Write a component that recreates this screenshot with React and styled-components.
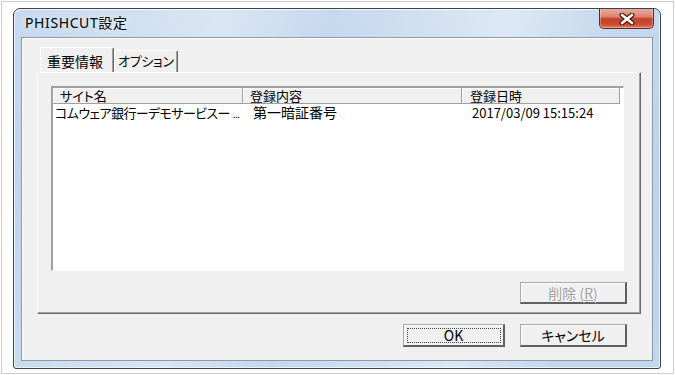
import React from 'react';
import styled, { createGlobalStyle } from 'styled-components';

const Global = createGlobalStyle`
  html, body { margin: 0; padding: 0; background: #fff; }
  body { font-family: "Noto Sans CJK JP", "Noto Sans", sans-serif; }
  * { box-sizing: border-box; }
`;

const Page = styled.div`
  width: 675px;
  height: 375px;
  padding: 1px;
  background: #fff;
`;

const Frame = styled.div`
  width: 673px;
  height: 373px;
  border: 1px solid #cfcfcf;
  padding: 6px 0 0 11px;
`;

const Window = styled.div`
  width: 648px;
  height: 361px;
  border: 1px solid #3a4350;
  border-radius: 7px 7px 3px 3px;
  background:
    linear-gradient(100deg, rgba(255,255,255,0) 0%, rgba(255,255,255,0.35) 30%, rgba(255,255,255,0) 45%, rgba(255,255,255,0.4) 70%, rgba(255,255,255,0) 85%),
    linear-gradient(180deg, #c6d9ee 0%, #bcd2ea 50%, #c2d7ee 100%);
  box-shadow: inset 1px 1px 0 rgba(255,255,255,0.75), inset -1px -1px 0 rgba(255,255,255,0.6);
  display: flex;
  flex-direction: column;
`;

const TitleBar = styled.div`
  height: 28px;
  display: flex;
  align-items: flex-start;
  justify-content: space-between;
  padding: 0 6px 0 11px;
`;

const Title = styled.div`
  font-family: "Noto Sans", "Noto Sans CJK JP", sans-serif;
  font-size: 14px;
  letter-spacing: 0.6px;
  line-height: 16px;
  color: #000;
  margin-top: 6px;
  text-shadow: 0 0 8px rgba(255,255,255,0.9);
`;

const CloseButton = styled.div`
  width: 55px;
  height: 20px;
  border: 1px solid #5b2a22;
  border-top: none;
  border-radius: 0 0 5px 5px;
  background: linear-gradient(180deg, #e8aa9c 0%, #dc8470 40%, #c5422c 52%, #cb4a32 80%, #df7a5e 100%);
  box-shadow: inset 0 -1px 0 rgba(255,255,255,0.35), inset 1px 0 0 rgba(255,255,255,0.3), inset -1px 0 0 rgba(255,255,255,0.3);
  display: flex;
  align-items: center;
  justify-content: center;
`;

const Client = styled.div`
  flex: 1;
  margin: 0 7px 7px 7px;
  border: 1px solid #8b9aab;
  background: #f0f0f0;
  box-shadow: inset 1px 1px 0 #fdfdfd;
  display: flex;
  flex-direction: column;
  padding-top: 9px;
`;

const TabStrip = styled.div`
  height: 25px;
  margin-left: 18px;
  display: flex;
  align-items: flex-end;
`;

const Tab = styled.div`
  height: ${p => (p.$active ? 25 : 22)}px;
  width: ${p => p.$w}px;
  padding-left: ${p => p.$pl}px;
  border-top: 1px solid #fff;
  border-left: 1px solid #fff;
  border-right: 1px solid #696969;
  box-shadow: inset -1px 0 0 #a0a0a0;
  border-radius: 2px 2px 0 0;
  font-size: ${p => p.$fs || 14}px;
  line-height: 18px;
  padding-top: ${p => (p.$active ? 4 : 1)}px;
  color: #000;
  font-feature-settings: "palt";
  letter-spacing: ${p => p.$ls || 0}px;
  white-space: nowrap;
`;

const Panel = styled.div`
  height: 242px;
  margin: 0 11px 0 15px;
  border-top: 1px solid #fff;
  border-left: 1px solid #fff;
  border-right: 1px solid #696969;
  border-bottom: 1px solid #696969;
  box-shadow: inset -1px -1px 0 #a0a0a0;
  padding: 13px 13px 9px 13px;
  display: flex;
  flex-direction: column;
`;

const ListView = styled.div`
  width: 573px;
  height: 185px;
  background: #fff;
  border-top: 2px solid #a0a0a0;
  border-left: 2px solid #a0a0a0;
  border-right: 1px solid #fff;
  border-bottom: 1px solid #fff;
  font-size: 14px;
  color: #000;
`;

const HeaderRow = styled.div`
  display: flex;
  height: 16px;
`;

const HeaderCell = styled.div`
  width: ${p => p.$w}px;
  padding-left: ${p => p.$pl}px;
  background: #f0f0f0;
  border-right: 1px solid #a0a0a0;
  border-bottom: 1px solid #a0a0a0;
  box-shadow: inset 1px 1px 0 #fff;
  font-size: 13px;
  line-height: 15px;
  white-space: nowrap;
  font-feature-settings: "palt";
`;

const Row = styled.div`
  display: flex;
  height: 17px;
  align-items: center;
`;

const Cell = styled.div`
  width: ${p => p.$w}px;
  padding-left: ${p => p.$pl}px;
  line-height: 17px;
  white-space: nowrap;
  overflow: ${p => (p.$clip ? 'hidden' : 'visible')};
  font-feature-settings: "palt";
  font-size: ${p => p.$fs || 14}px;
  letter-spacing: ${p => p.$ls || 0}px;
`;

const Dots = styled.span`
  letter-spacing: -0.5px;
  font-size: 10px;
  margin-left: 3px;
`;

const PanelButtons = styled.div`
  display: flex;
  justify-content: flex-end;
  margin-top: 11px;
`;

const Button = styled.div`
  width: ${p => p.$w}px;
  height: ${p => p.$h}px;
  background: #f0f0f0;
  border-top: 1px solid #a8a8a8;
  border-left: 1px solid #a8a8a8;
  border-right: 2px solid #616161;
  border-bottom: 2px solid #616161;
  box-shadow: inset 1px 1px 0 #fff;
  font-size: 14px;
  line-height: 18px;
  display: flex;
  align-items: center;
  justify-content: center;
  color: ${p => (p.$disabled ? '#a0a0a0' : '#000')};
  text-shadow: ${p => (p.$disabled ? '1px 1px 0 #fff' : 'none')};
  outline: ${p => (p.$focus ? '1px dotted #444' : 'none')};
  outline-offset: -5px;
  font-feature-settings: "palt";
  white-space: nowrap;
`;

const Underline = styled.span`
  text-decoration: underline;
  text-underline-offset: 1px;
`;

const DialogButtons = styled.div`
  display: flex;
  justify-content: flex-end;
  gap: 15px;
  margin-top: 10px;
  padding-right: 25px;
`;

const XIcon = () => (
  <svg width="16" height="12" viewBox="0 0 16 12">
    <path d="M3 2 L13 10 M13 2 L3 10" stroke="#4a1a12" strokeWidth="5" strokeLinecap="round" />
    <path d="M3 2 L13 10 M13 2 L3 10" stroke="#fff" strokeWidth="2.6" strokeLinecap="round" />
  </svg>
);

const cols = [190, 219, 158];

export default function App() {
  return (
    <Page>
      <Global />
      <Frame>
        <Window>
          <TitleBar>
            <Title>PHISHCUT設定</Title>
            <CloseButton>
              <XIcon />
            </CloseButton>
          </TitleBar>
          <Client>
            <TabStrip>
              <Tab $active $w={74} $pl={6}>重要情報</Tab>
              <Tab $w={64} $pl={3} $fs={13} $ls={-0.3}>オプション</Tab>
            </TabStrip>
            <Panel>
              <ListView>
                <HeaderRow>
                  <HeaderCell $w={cols[0]} $pl={7}>サイト名</HeaderCell>
                  <HeaderCell $w={cols[1]} $pl={7}>登録内容</HeaderCell>
                  <HeaderCell $w={cols[2]} $pl={8}>登録日時</HeaderCell>
                </HeaderRow>
                <Row>
                  <Cell $w={cols[0]} $pl={2} $fs={13} $ls={-0.6}>
                    コムウェア銀行ーデモサービスー<Dots>...</Dots>
                  </Cell>
                  <Cell $w={cols[1]} $pl={10}>第一暗証番号</Cell>
                  <Cell $w={cols[2]} $pl={10} $fs={13}>2017/03/09 15:15:24</Cell>
                </Row>
              </ListView>
              <PanelButtons>
                <Button $w={107} $h={22} $disabled>
                  削除 (<Underline>R</Underline>)
                </Button>
              </PanelButtons>
            </Panel>
            <DialogButtons>
              <Button $w={102} $h={23} $focus>OK</Button>
              <Button $w={107} $h={23}>キャンセル</Button>
            </DialogButtons>
          </Client>
        </Window>
      </Frame>
    </Page>
  );
}
